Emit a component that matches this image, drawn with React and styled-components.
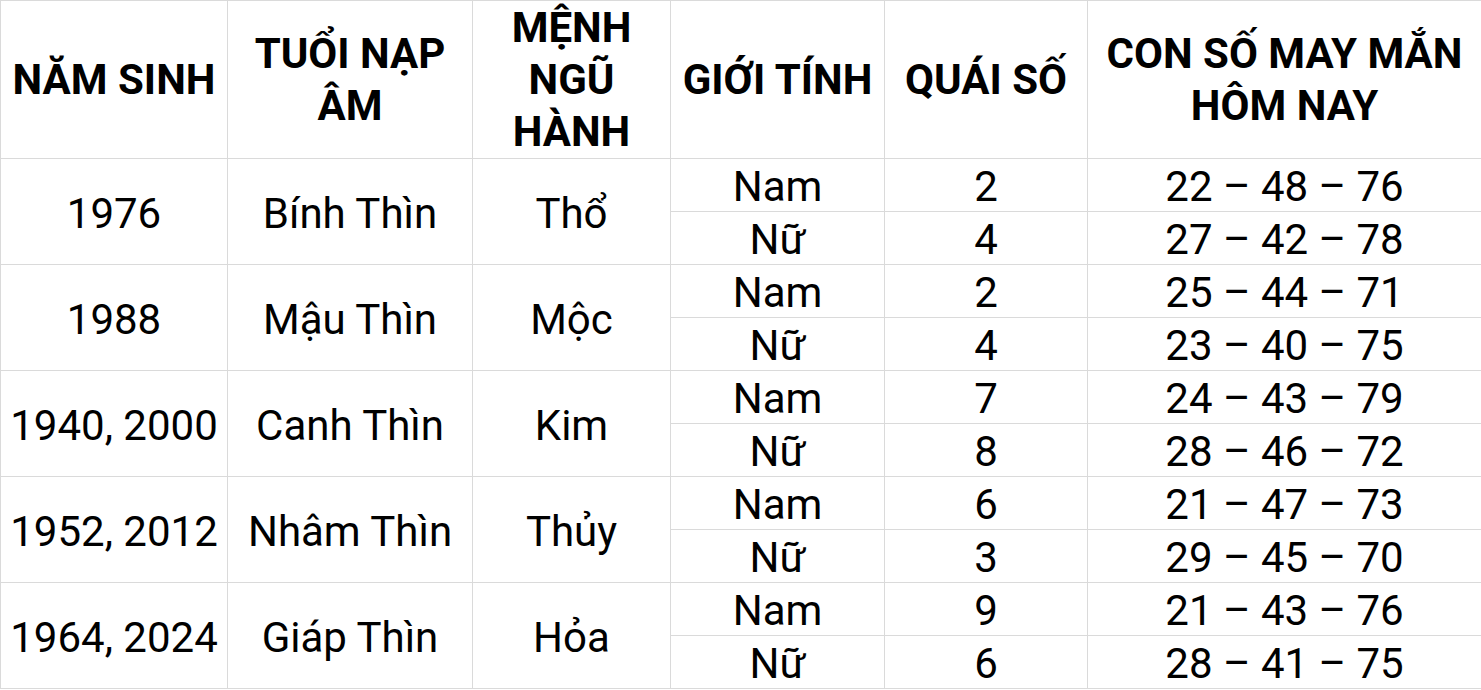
import React from 'react';
import styled, { createGlobalStyle } from 'styled-components';

const GlobalStyle = createGlobalStyle`
    body {
        margin: 0;
        background: #fff;
        font-family: Roboto, "Liberation Sans", sans-serif;
        overflow: hidden;
    }
`;

const rows = [
    { year: '1976', tuoi: 'Bính Thìn', menh: 'Thổ', nam: ['2', '22 – 48 – 76'], nu: ['4', '27 – 42 – 78'] },
    { year: '1988', tuoi: 'Mậu Thìn', menh: 'Mộc', nam: ['2', '25 – 44 – 71'], nu: ['4', '23 – 40 – 75'] },
    { year: '1940, 2000', tuoi: 'Canh Thìn', menh: 'Kim', nam: ['7', '24 – 43 – 79'], nu: ['8', '28 – 46 – 72'] },
    { year: '1952, 2012', tuoi: 'Nhâm Thìn', menh: 'Thủy', nam: ['6', '21 – 47 – 73'], nu: ['3', '29 – 45 – 70'] },
    { year: '1964, 2024', tuoi: 'Giáp Thìn', menh: 'Hỏa', nam: ['9', '21 – 43 – 76'], nu: ['6', '28 – 41 – 75'] },
];

const App = () => {
    return (
        <>
            <GlobalStyle />
            <Wrapper>
                <Table>
                    <colgroup>
                        <col style={{ width: 227 }} />
                        <col style={{ width: 245 }} />
                        <col style={{ width: 198 }} />
                        <col style={{ width: 214 }} />
                        <col style={{ width: 203 }} />
                        <col style={{ width: 394 }} />
                    </colgroup>
                    <thead>
                        <tr>
                            <Th>NĂM SINH</Th>
                            <Th>TUỔI NẠP<br />ÂM</Th>
                            <Th>MỆNH<br />NGŨ<br />HÀNH</Th>
                            <Th>GIỚI TÍNH</Th>
                            <Th>QUÁI SỐ</Th>
                            <Th>CON SỐ MAY MẮN<br />HÔM NAY</Th>
                        </tr>
                    </thead>
                    <tbody>
                        {rows.map((r, i) => (
                            <React.Fragment key={i}>
                                <Row>
                                    <Td rowSpan={2}><Text>{r.year}</Text></Td>
                                    <Td rowSpan={2}><Text>{r.tuoi}</Text></Td>
                                    <Td rowSpan={2}><Text>{r.menh}</Text></Td>
                                    <Td><Text>Nam</Text></Td>
                                    <Td><Text>{r.nam[0]}</Text></Td>
                                    <Td><Text>{r.nam[1]}</Text></Td>
                                </Row>
                                <Row>
                                    <Td><Text>Nữ</Text></Td>
                                    <Td><Text>{r.nu[0]}</Text></Td>
                                    <Td><Text>{r.nu[1]}</Text></Td>
                                </Row>
                            </React.Fragment>
                        ))}
                    </tbody>
                </Table>
            </Wrapper>
        </>
    );
}

const Wrapper = styled.div`
    width: 1481px;
    height: 690px;
    overflow: hidden;
`;

const Table = styled.table`
    border-collapse: collapse;
    table-layout: fixed;
    width: 1481px;
    color: #000;
`;

const Th = styled.th`
    height: 157px;
    padding: 0 2px;
    border: 1px solid #dadada;
    font-size: 42px;
    font-weight: 700;
    line-height: 52px;
    text-align: center;
    vertical-align: middle;
    white-space: nowrap;
`;

const Row = styled.tr`
    height: 53px;
`;

const Td = styled.td`
    padding: 0 2px;
    border: 1px solid #dadada;
    text-align: center;
    vertical-align: middle;
    white-space: nowrap;
`;

const Text = styled.div`
    font-size: 42px;
    font-weight: 400;
    line-height: 42px;
    height: 42px;
    padding-top: 4px;
`;

export default App;
